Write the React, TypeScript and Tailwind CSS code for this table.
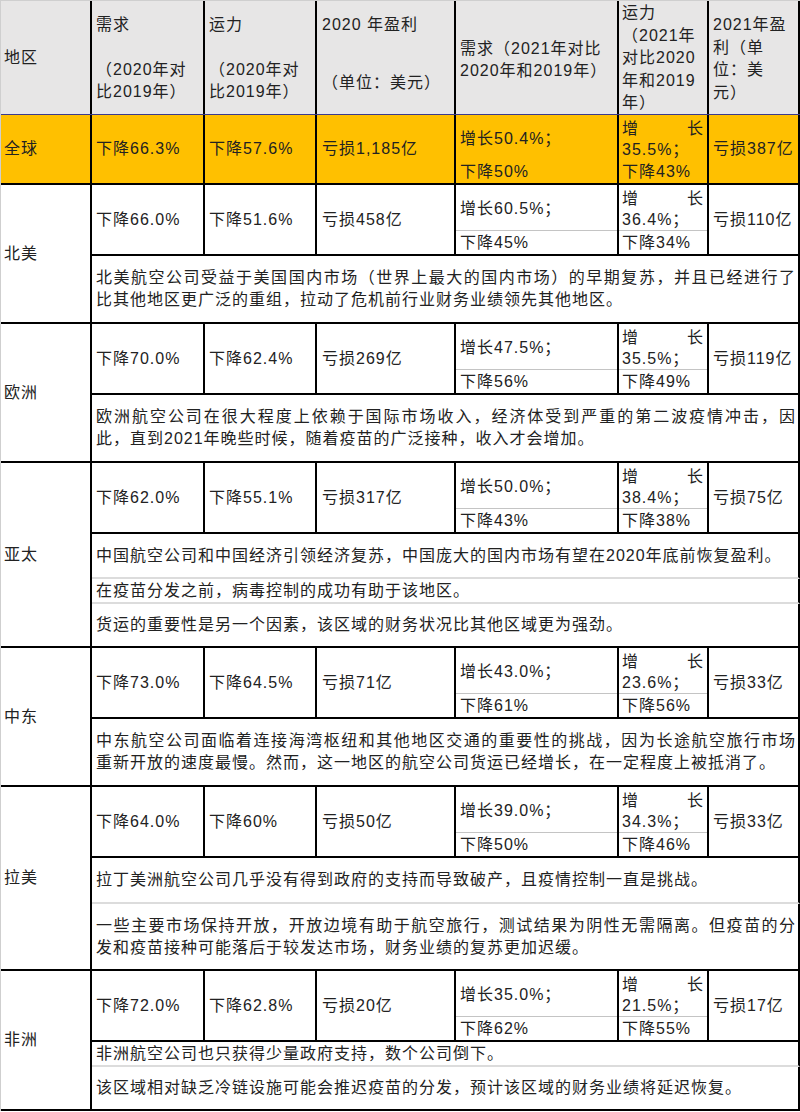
import React from "react";

type Line = { t: string; full?: boolean };
type Para = { h: string; lines: Line[] };

type Stats = {
  d20: string;
  c20: string;
  p20: string;
  d21a: string;
  d21b: string;
  c21a: string;
  c21b: string;
  p21: string;
};

type Region = { name: string; h: string; stats: Stats; paras: Para[] };

const GLOBAL: Stats = {
  d20: "下降66.3%",
  c20: "下降57.6%",
  p20: "亏损1,185亿",
  d21a: "增长50.4%；",
  d21b: "下降50%",
  c21a: "35.5%；",
  c21b: "下降43%",
  p21: "亏损387亿",
};

const REGIONS: Region[] = [
  {
    name: "北美",
    h: "h-[139px]",
    stats: { d20: "下降66.0%", c20: "下降51.6%", p20: "亏损458亿", d21a: "增长60.5%；", d21b: "下降45%", c21a: "36.4%；", c21b: "下降34%", p21: "亏损110亿" },
    paras: [
      {
        h: "flex-1",
        lines: [
          { t: "北美航空公司受益于美国国内市场（世界上最大的国内市场）的早期复苏，并且已经进行了", full: true },
          { t: "比其他地区更广泛的重组，拉动了危机前行业财务业绩领先其他地区。" },
        ],
      },
    ],
  },
  {
    name: "欧洲",
    h: "h-[139px]",
    stats: { d20: "下降70.0%", c20: "下降62.4%", p20: "亏损269亿", d21a: "增长47.5%；", d21b: "下降56%", c21a: "35.5%；", c21b: "下降49%", p21: "亏损119亿" },
    paras: [
      {
        h: "flex-1",
        lines: [
          { t: "欧洲航空公司在很大程度上依赖于国际市场收入，经济体受到严重的第二波疫情冲击，因", full: true },
          { t: "此，直到2021年晚些时候，随着疫苗的广泛接种，收入才会增加。" },
        ],
      },
    ],
  },
  {
    name: "亚太",
    h: "h-[185px]",
    stats: { d20: "下降62.0%", c20: "下降55.1%", p20: "亏损317亿", d21a: "增长50.0%；", d21b: "下降43%", c21a: "38.4%；", c21b: "下降38%", p21: "亏损75亿" },
    paras: [
      { h: "h-[45px] border-b-2", lines: [{ t: "中国航空公司和中国经济引领经济复苏，中国庞大的国内市场有望在2020年底前恢复盈利。" }] },
      { h: "h-[25px] border-b-2", lines: [{ t: "在疫苗分发之前，病毒控制的成功有助于该地区。" }] },
      { h: "flex-1", lines: [{ t: "货运的重要性是另一个因素，该区域的财务状况比其他区域更为强劲。" }] },
    ],
  },
  {
    name: "中东",
    h: "h-[139px]",
    stats: { d20: "下降73.0%", c20: "下降64.5%", p20: "亏损71亿", d21a: "增长43.0%；", d21b: "下降61%", c21a: "23.6%；", c21b: "下降56%", p21: "亏损33亿" },
    paras: [
      {
        h: "flex-1",
        lines: [
          { t: "中东航空公司面临着连接海湾枢纽和其他地区交通的重要性的挑战，因为长途航空旅行市场", full: true },
          { t: "重新开放的速度最慢。然而，这一地区的航空公司货运已经增长，在一定程度上被抵消了。" },
        ],
      },
    ],
  },
  {
    name: "拉美",
    h: "h-[184px]",
    stats: { d20: "下降64.0%", c20: "下降60%", p20: "亏损50亿", d21a: "增长39.0%；", d21b: "下降50%", c21a: "34.3%；", c21b: "下降46%", p21: "亏损33亿" },
    paras: [
      { h: "h-[46px] border-b-2", lines: [{ t: "拉丁美洲航空公司几乎没有得到政府的支持而导致破产，且疫情控制一直是挑战。" }] },
      {
        h: "flex-1",
        lines: [
          { t: "一些主要市场保持开放，开放边境有助于航空旅行，测试结果为阴性无需隔离。但疫苗的分", full: true },
          { t: "发和疫苗接种可能落后于较发达市场，财务业绩的复苏更加迟缓。" },
        ],
      },
    ],
  },
  {
    name: "非洲",
    h: "h-[140px]",
    stats: { d20: "下降72.0%", c20: "下降62.8%", p20: "亏损20亿", d21a: "增长35.0%；", d21b: "下降62%", c21a: "21.5%；", c21b: "下降55%", p21: "亏损17亿" },
    paras: [
      { h: "h-[25px] border-b-2", lines: [{ t: "非洲航空公司也只获得少量政府支持，数个公司倒下。" }] },
      { h: "flex-1", lines: [{ t: "该区域相对缺乏冷链设施可能会推迟疫苗的分发，预计该区域的财务业绩将延迟恢复。" }] },
    ],
  },
];

/** Columns 2–7: the numbers row. Widths add up to 708px with the 2px rules. */
function StatsRow({ s, sub, className }: { s: Stats; sub: string; className: string }) {
  return (
    <div className={`flex ${className}`}>
      <div className="flex w-[113px] items-center border-r-2 border-black pl-[4px]">{s.d20}</div>
      <div className="flex w-[112px] items-center border-r-2 border-black pl-[4px]">{s.c20}</div>
      <div className="flex w-[139px] items-center border-r-2 border-black pl-[5px]">{s.p20}</div>
      <div className="flex w-[163px] flex-col border-r-2 border-black">
        <div className={`flex h-[46px] items-center border-b pl-[4px] pt-[3px] ${sub}`}>{s.d21a}</div>
        <div className="flex flex-1 items-center pl-[4px]">{s.d21b}</div>
      </div>
      <div className="flex w-[90px] flex-col border-r-2 border-black">
        <div className={`flex h-[46px] flex-col border-b px-[3px] pt-[3px] leading-[21px] ${sub}`}>
          <div className="flex justify-between">
            <span>增</span>
            <span>长</span>
          </div>
          <div>{s.c21a}</div>
        </div>
        <div className="flex flex-1 items-center pl-[3px]">{s.c21b}</div>
      </div>
      <div className="flex w-[91px] items-center border-r-2 border-black pl-[4px]">{s.p21}</div>
    </div>
  );
}

function Header() {
  return (
    <div className="flex h-[115px] border-t border-b border-t-[#cfcfcf] border-b-[#3b3b8e] bg-[#e7e6e6]">
      <div className="flex w-[91px] items-center border-r-2 border-black pl-[3px]">地区</div>
      <div className="flex w-[113px] flex-col border-r-2 border-black pl-[4px] pt-[13px]">
        <div>需求</div>
        <div className="mt-[23px]">（2020年对</div>
        <div>比2019年）</div>
      </div>
      <div className="flex w-[112px] flex-col border-r-2 border-black pl-[4px] pt-[13px]">
        <div>运力</div>
        <div className="mt-[23px]">（2020年对</div>
        <div>比2019年）</div>
      </div>
      <div className="flex w-[139px] flex-col border-r-2 border-black pl-[5px] pt-[13px]">
        <div>2020 年盈利</div>
        <div className="mt-[36px]">（单位：美元）</div>
      </div>
      <div className="flex w-[163px] flex-col border-r-2 border-black pl-[4px] pt-[37px]">
        <div>需求（2021年对比</div>
        <div>2020年和2019年）</div>
      </div>
      <div className="flex w-[90px] flex-col border-r-2 border-black pl-[3px] pt-[1px] leading-[22.5px]">
        <div>运力</div>
        <div>（2021年</div>
        <div>对比2020</div>
        <div>年和2019</div>
        <div>年）</div>
      </div>
      <div className="flex w-[91px] flex-col border-r-2 border-black pl-[4px] pt-[13px] leading-[22.5px]">
        <div>2021年盈</div>
        <div>利（单</div>
        <div>位：美</div>
        <div>元）</div>
      </div>
    </div>
  );
}

function RegionBlock({ r }: { r: Region }) {
  return (
    <div className={`flex border-b-2 border-black ${r.h}`}>
      <div className="flex w-[91px] shrink-0 items-center border-r-2 border-black pl-[3px]">{r.name}</div>
      <div className="flex flex-1 flex-col">
        <StatsRow s={r.stats} sub="border-[#c4c4c4]" className="h-[71px] shrink-0 border-b-2 border-black" />
        {r.paras.map((p, i) => (
          <div
            key={i}
            className={`flex flex-col justify-center border-r-2 border-r-black border-b-[#dcdcdc] pl-[4px] pr-[2px] ${p.h}`}
          >
            {p.lines.map((l, j) => (
              <div key={j} className={l.full ? "text-justify [text-align-last:justify]" : ""}>
                {l.t}
              </div>
            ))}
          </div>
        ))}
      </div>
    </div>
  );
}

export default function App() {
  return (
    <div className="min-h-[1112px] bg-white">
      <div
        className={
          "w-[800px] border-l border-[#cfcfcf] font-['Liberation_Sans','Noto_Sans_CJK_SC',sans-serif] text-[16px] leading-[22px] tracking-[1px] text-[#222]"
        }
      >
        <Header />
        <div className="flex h-[70px] border-b-2 border-black bg-[#ffc000]">
          <div className="flex w-[91px] shrink-0 items-center border-r-2 border-black pl-[3px]">全球</div>
          <div className="flex-1">
            <StatsRow s={GLOBAL} sub="border-[#ffc000]" className="h-full" />
          </div>
        </div>
        {REGIONS.map((r) => (
          <RegionBlock key={r.name} r={r} />
        ))}
      </div>
    </div>
  );
}
